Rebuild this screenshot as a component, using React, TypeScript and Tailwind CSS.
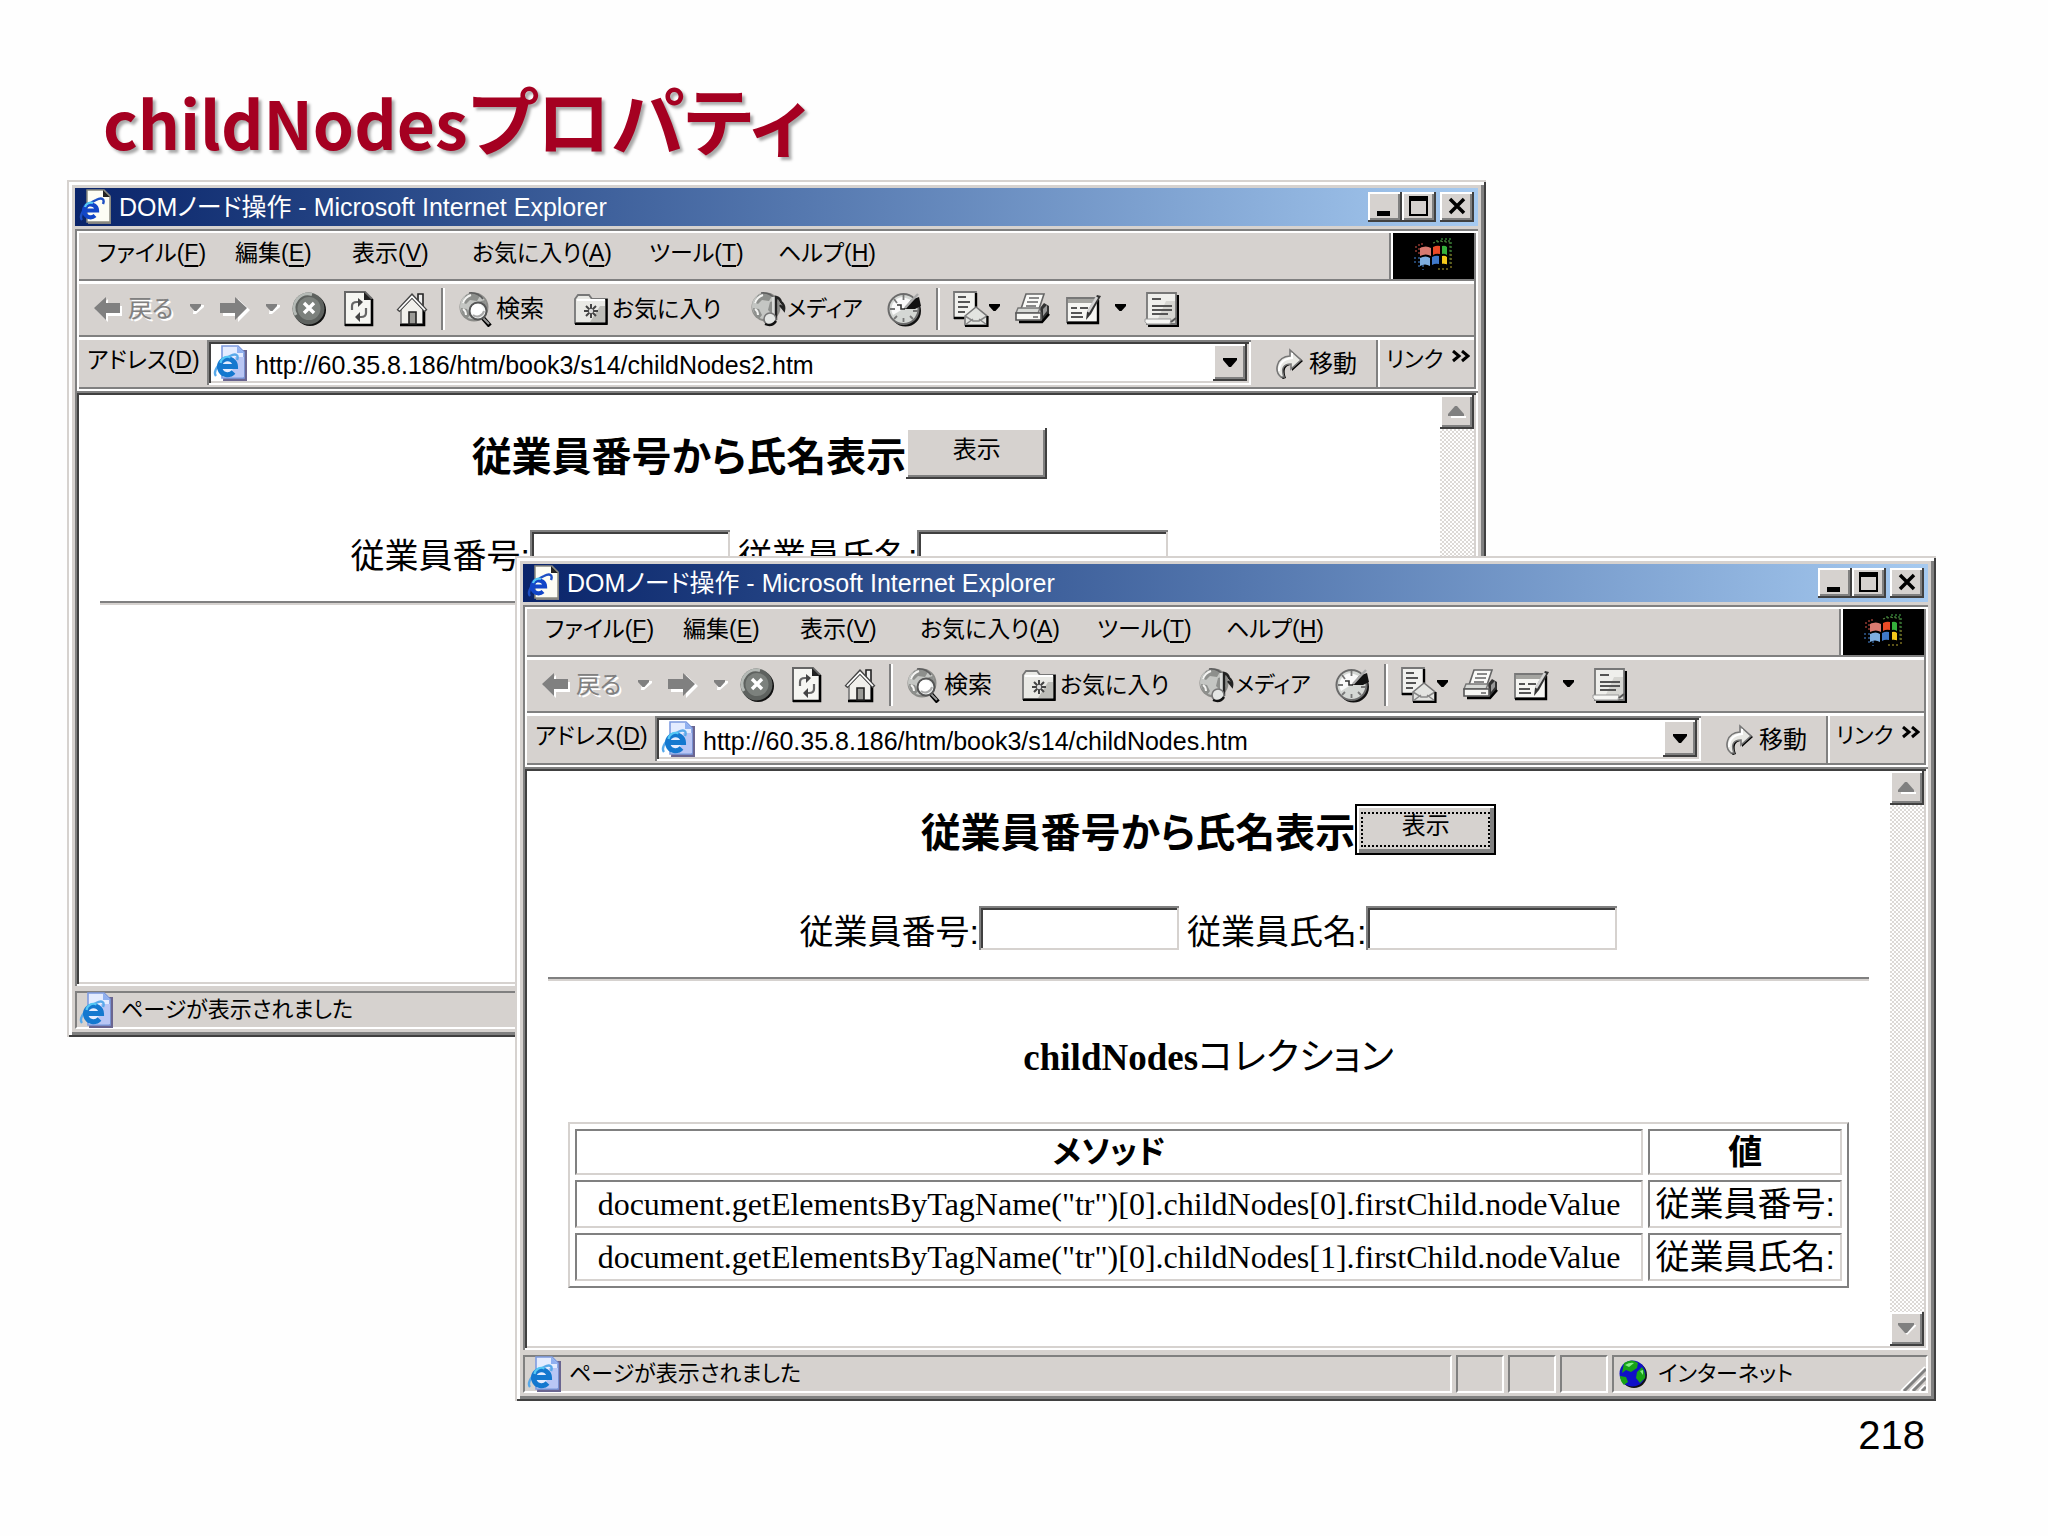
import React from "react";

const RAISED =
  "bg-[#d6d2cf] shadow-[inset_-2px_-2px_0_#404040,inset_2px_2px_0_#ffffff,inset_-4px_-4px_0_#808080]";
const JP = "font-['Liberation_Sans','Noto_Sans_CJK_JP',sans-serif] [font-feature-settings:'palt']";
const JP_SERIF = "font-['Liberation_Serif','Noto_Sans_CJK_JP',serif]";

/* ---------- icons ---------- */

function PageIcon({ title = false }: { title?: boolean }) {
  return (
    <svg viewBox="0 0 34 36" className="h-9 w-[34px] shrink-0" aria-hidden="true">
      {title ? (
        <>
          <path d="M9 2h17l6 6v27H9z" fill="#808080" />
          <path d="M8 1h17l6 6v26H8z" fill="#fdfdf4" stroke="#8a8a80" strokeWidth="1.5" />
          <path d="M24 1v7h7z" fill="#222" />
        </>
      ) : (
        <>
          <path d="M12 5h22v31H10z" fill="#6a6590" />
          <path d="M9 1h16l6 6v26H9z" fill="#e4ecff" stroke="#7d9be0" strokeWidth="1.6" />
          <path d="M24 1v7h7z" fill="#8fb0f0" />
          <path d="M22 12h9v20H18z" fill="#b9c6f4" />
        </>
      )}
      <path d="M3 31C-1 26 8 15 17 11c6-3 9-1 7 4" fill="none" stroke={title ? "#1d4fc4" : "#58a9ea"} strokeWidth="2.4" />
      <path
        d={title ? "M5 21.500h13a6.500 6.500 0 1 0-2 5" : "M6 21.500h16.500a8 8 0 1 0-2 5.500"}
        fill="none"
        stroke={title ? "#1246c8" : "#1478cf"}
        strokeWidth={title ? "4.200" : "5"}
      />
      <path d={title ? "M6 18a6 6 0 0 1 8-4" : "M7.500 18a7 7 0 0 1 10-5.500"} fill="none" stroke="#55c8f5" strokeWidth="2.2" />
    </svg>
  );
}

function Arrow({ left = false }: { left?: boolean }) {
  return (
    <svg viewBox="0 0 30 26" className="h-[26px] w-[30px] shrink-0" aria-hidden="true">
      {left ? (
        <>
          <path d="M2 14 14 3v7h14v10H14v6z" fill="#fff" />
          <path d="M0 12 12 1v6h14v10H12v7z" fill="#808080" />
        </>
      ) : (
        <>
          <path d="M30 14 18 3v7H3v10h15v6z" fill="#fff" />
          <path d="M27 12 15 1v6H0v10h15v7z" fill="#808080" />
        </>
      )}
    </svg>
  );
}

function Drop({ disabled = false }: { disabled?: boolean }) {
  return (
    <svg viewBox="0 0 14 10" className="h-2.5 w-3.5 shrink-0" aria-hidden="true">
      {disabled && <path d="M3 10h3l8-7V1H4z" fill="#fff" />}
      <path d="M0 0h11v2L6.500 7h-2L0 2z" fill={disabled ? "#808080" : "#000"} />
    </svg>
  );
}

function StopIcon() {
  return (
    <svg viewBox="0 0 34 36" className="h-9 w-[34px]" aria-hidden="true">
      <circle cx="18" cy="19" r="16" fill="#111" />
      <circle cx="16.500" cy="17.500" r="16" fill="#5e625f" />
      <path d="M4 24A14 14 0 0 1 20 3.500" fill="none" stroke="#b5bab6" strokeWidth="3" />
      <circle cx="17" cy="17.500" r="11.500" fill="#7c817d" />
      <path d="m12 12 10 10M22 12 12 22" stroke="#fff" strokeWidth="3.400" />
    </svg>
  );
}

function RefreshIcon() {
  return (
    <svg viewBox="0 0 30 36" className="h-9 w-[30px]" aria-hidden="true">
      <path d="M1 1h20l7 7v26H1z" fill="#f6f6f2" stroke="#666" strokeWidth="2" />
      <path d="M28 8v26H1" fill="none" stroke="#000" strokeWidth="2.600" />
      <path d="M20 1v8h8z" fill="#222" />
      <path d="M8 19v-4q0-4 5-4h2M22 17v5q0 4-5 4h-2" fill="none" stroke="#666" strokeWidth="2.200" />
      <path d="m14 7 5 4-5 5zM16 21l-5 5 5 5z" fill="#444" />
    </svg>
  );
}

function HomeIcon() {
  return (
    <svg viewBox="0 0 32 36" className="h-9 w-8" aria-hidden="true">
      <path d="M22 3h5v13h-5z" fill="#eee" stroke="#222" strokeWidth="1.600" />
      <path d="M5 18 16 7l11 11v15H5z" fill="#f1f0ec" stroke="#777" strokeWidth="1.600" />
      <path d="M28 18v16H4" fill="none" stroke="#000" strokeWidth="2.600" />
      <path d="M2 20 16 5l14 15" fill="none" stroke="#444" strokeWidth="4" />
      <path d="M3 19 16 5.500 29 19" fill="none" stroke="#fff" strokeWidth="1.800" />
      <path d="M13 21h7v12h-7z" fill="#9a9a96" stroke="#222" strokeWidth="1.600" />
    </svg>
  );
}

function GlobeBase() {
  return (
    <>
      <circle cx="16" cy="16" r="14.500" fill="#8b8b88" />
      <circle cx="15" cy="15" r="13" fill="#c4c6c3" />
      <path d="M8 4q8-4 14 1l-3 5-7-1-4 4-4-2zM3 17l6 1 3 6-3 4q-6-5-6-11zM20 11l7-2 2 8-6 7-5-5z" fill="#8d8f8c" />
      <path d="M5 12q2-6 8-8M5 18q3 2 3 6" fill="none" stroke="#f4f4f2" strokeWidth="2" />
      <path d="M11 2q9-1 14 6" fill="none" stroke="#5e5e5e" strokeWidth="1.600" />
    </>
  );
}

function SearchIcon() {
  return (
    <svg viewBox="0 0 34 36" className="h-9 w-[34px] shrink-0" aria-hidden="true">
      <GlobeBase />
      <path d="m25 27 7 8" stroke="#000" strokeWidth="4.500" />
      <path d="m24 26 7 7" stroke="#999" strokeWidth="2" />
      <circle cx="20" cy="20" r="8.500" fill="#f3f5f4" stroke="#555" strokeWidth="2" />
      <circle cx="19" cy="19" r="6" fill="#fff" />
      <path d="M15 24a7 7 0 0 0 11-4" fill="none" stroke="#aaa" strokeWidth="2" />
    </svg>
  );
}

function FavoriteIcon() {
  return (
    <svg viewBox="0 0 34 32" className="h-8 w-[34px] shrink-0" aria-hidden="true">
      <path d="M1 6 4 2h11l3 4h15v24H1z" fill="#e9e9e5" stroke="#777" strokeWidth="1.800" />
      <path d="M3 7h28" stroke="#fff" strokeWidth="2" />
      <path d="M32.500 6v25H1" fill="none" stroke="#000" strokeWidth="2.400" />
      <path d="M26 13h5v16H16z" fill="#bdbdb8" />
      <path d="M17 11v14M10 18h14M12 13l10 10M22 13 12 23" stroke="#444" strokeWidth="2" />
      <circle cx="17" cy="18" r="2.200" fill="#ddd" />
    </svg>
  );
}

function MediaIcon() {
  return (
    <svg viewBox="0 0 36 36" className="h-9 w-9 shrink-0" aria-hidden="true">
      <GlobeBase />
      <path d="M22 28V6q4-1 4 2v20z" fill="#d8dad8" />
      <path d="M26 29V6q4 1 5 5 4 3 3 8l-4-5" fill="none" stroke="#222" strokeWidth="2.400" />
      <circle cx="20" cy="28" r="6" fill="#e4e6e4" stroke="#777" strokeWidth="1.600" />
      <path d="M15 33q7 3 11-3" fill="none" stroke="#111" strokeWidth="2.400" />
    </svg>
  );
}

function HistoryIcon() {
  return (
    <svg viewBox="0 0 36 36" className="h-9 w-9" aria-hidden="true">
      <circle cx="18.500" cy="20" r="15.500" fill="#111" />
      <circle cx="16.500" cy="18" r="15" fill="#d4d7d4" stroke="#6b6b6b" strokeWidth="2" />
      <path d="M6 24A12 12 0 0 1 16 6l8 3-8 9z" fill="#fafafa" />
      <g stroke="#777" strokeWidth="1.800">
        <path d="M16.500 4v5M16.500 27v4M3 18h5M26 20h5M7 8l3 4M7 28l3-3M26 28l-3-3" />
      </g>
      <path d="m17 18 7-9 8-3 2 9-6 3z" fill="#111" />
      <path d="M18 17 31 3" stroke="#aaa" strokeWidth="2.400" />
      <path d="M10 14h4v4h4" fill="none" stroke="#333" strokeWidth="1.600" />
    </svg>
  );
}

function MailIcon() {
  return (
    <svg viewBox="0 0 36 36" className="h-9 w-9" aria-hidden="true">
      <path d="M1 1h22v26H1z" fill="#f1f1ee" stroke="#777" strokeWidth="1.800" />
      <path d="M23 2v14M1 27h10" stroke="#000" strokeWidth="2.400" />
      <path d="M5 6h8M5 11h12M5 16h10M5 21h7" stroke="#555" strokeWidth="2" />
      <path d="m12 25 11-9 11 9v9H12z" fill="#e3e4e1" stroke="#777" strokeWidth="1.600" />
      <path d="m12 25 8 5h6l8-5M12 34l8-6M34 34l-8-6" fill="none" stroke="#888" strokeWidth="1.500" />
      <path d="M34.500 25v10H12" fill="none" stroke="#000" strokeWidth="2.200" />
    </svg>
  );
}

function PrintIcon() {
  return (
    <svg viewBox="0 0 36 34" className="h-[34px] w-9" aria-hidden="true">
      <path d="M11 2h18l-5 15H6z" fill="#fafaf8" stroke="#666" strokeWidth="1.600" />
      <path d="M14 6h10M12 10h11M11 14h10" stroke="#666" strokeWidth="1.600" />
      <path d="m25 16 4-5 5 3v8l-7 9z" fill="#333" />
      <path d="M3 16h22l-2 5H1z" fill="#d8dad7" stroke="#777" strokeWidth="1.400" />
      <path d="M1 21h25v7H1z" fill="#f7f7f4" stroke="#555" strokeWidth="1.600" />
      <path d="M4 30h23l7-8" fill="none" stroke="#000" strokeWidth="2.600" />
      <path d="m28 17 4-4v6l-4 5z" fill="#999" />
      <path d="M18 25h5" stroke="#888" strokeWidth="2" />
    </svg>
  );
}

function EditIcon() {
  return (
    <svg viewBox="0 0 36 34" className="h-[34px] w-9" aria-hidden="true">
      <path d="M1 6h31v24H1z" fill="#f6f6f3" stroke="#777" strokeWidth="1.800" />
      <path d="M2 7h29v4H2z" fill="#a4a4a0" />
      <path d="M32 8v23H1" fill="none" stroke="#000" strokeWidth="2.400" />
      <path d="M5 16h6M14 16h8M5 21h11M5 25h12" stroke="#555" strokeWidth="1.800" />
      <path d="m31 3 4 1-10 18-5 6 1-8z" fill="#333" />
      <path d="m31 5-9 15" stroke="#d4d4d4" strokeWidth="2.600" />
    </svg>
  );
}

function DiscussIcon() {
  return (
    <svg viewBox="0 0 36 36" className="h-9 w-9" aria-hidden="true">
      <path d="M5 4h30v32H4z" fill="#000" />
      <path d="M3 2h29v31H3z" fill="#efefec" stroke="#777" strokeWidth="1.800" />
      <path d="M22 10h9v22H12z" fill="#d6d6d2" />
      <path d="M8 8h9M8 15h20M8 19h20M8 23h16" stroke="#555" strokeWidth="2" />
      <path d="M1 28h26l-1 5H3q-3-2-2-5z" fill="#f6f6f4" stroke="#999" strokeWidth="1" />
      <path d="m27 31 5-4" stroke="#555" strokeWidth="2" />
    </svg>
  );
}

function GoIcon() {
  return (
    <svg viewBox="0 0 30 34" className="h-[34px] w-[30px] shrink-0" aria-hidden="true">
      <path d="M8 32C-1 26 0 11 16 10V4l12 10-11 10v-6c-7 0-9 5-6 13z" fill="#000" />
      <path d="M6 30C-1 24 1 10 15 9V3l11 10-10 9v-5C8 17 6 22 9 30z" fill="#e8e8e4" stroke="#777" strokeWidth="1.600" />
      <path d="M17 6v5C8 12 4 17 4 24" fill="none" stroke="#fff" strokeWidth="2" />
    </svg>
  );
}

function WindowsLogo() {
  return (
    <svg viewBox="0 0 46 36" className="h-9 w-[46px]" aria-hidden="true">
      <g opacity="0.600" strokeWidth="2" strokeDasharray="2 2" fill="none">
        <path d="M5 8v8M8 6v10M11 5v11" stroke="#b5463c" />
        <path d="M4 19v8M8 19v12M12 19v13" stroke="#3c74b8" />
        <path d="M25 3h14M30 1h10M40 4v10" stroke="#3f9440" />
        <path d="M40 16v14M37 31h-12" stroke="#9a8a28" />
      </g>
      <path d="M9 10q6-3 11 0v8q-5-3-11 0z" fill="#d87a70" />
      <path d="M22 9q4-2 7-1v8q-4-1-7 1z" fill="#ec4a26" />
      <path d="M9 20q6-3 10 0v8q-5-3-10 0z" fill="#7eaee0" />
      <path d="M21 19q4-2 7-1v8q-4-1-7 1z" fill="#3f78c8" />
      <path d="M31 8q3-1 5 1v8q-3-2-5-1z" fill="#35b03c" />
      <path d="M31 18q3-1 5 1v8q-3-2-5-1z" fill="#f4c81a" />
      <path d="M20.500 7q8-4 17-1v22q-8-3-17 1" fill="none" stroke="#000" strokeWidth="2" />
      <path d="M22 5q9-3 17 0v22" fill="none" stroke="#4f7a3a" strokeWidth="1.200" strokeDasharray="2 2" />
    </svg>
  );
}

function EarthIcon() {
  return (
    <svg viewBox="0 0 30 30" className="h-[30px] w-[30px] shrink-0" aria-hidden="true">
      <circle cx="16" cy="16" r="13" fill="#111" />
      <circle cx="14.500" cy="14.500" r="13" fill="#1010c8" />
      <path d="M6 4q8-5 14 0l-1 5-6 4-5-2-4 3zM19 13l5-5q4 5 3 11l-5 5-4-5zM2 17l6 1 2 5-4 3q-4-4-4-9z" fill="#17a317" />
      <path d="M7 6q5-3 9-2l-5 4zM22 12l3-1v5z" fill="#86ee86" />
    </svg>
  );
}

/* ---------- window parts ---------- */

function CaptionButton({ label, children, className = "" }: { label: string; children: React.ReactNode; className?: string }) {
  return (
    <button aria-label={label} className={`flex h-[30px] w-[34px] items-center justify-center ${RAISED} ${className}`}>
      <svg viewBox="0 0 34 30" className="h-[30px] w-[34px]" aria-hidden="true">
        {children}
      </svg>
    </button>
  );
}

function TitleBar() {
  return (
    <header className="mb-[3px] flex h-[38px] items-center bg-linear-to-r from-[#0a246a] to-[#a6caf0] pl-1 pr-1">
      <PageIcon title />
      <h2 className="ml-1.5 min-w-0 flex-1 truncate text-[25px] leading-9 text-white">
        DOMノード操作 - Microsoft Internet Explorer
      </h2>
      <CaptionButton label="最小化">
        <path d="M9 19h13v5H9z" />
      </CaptionButton>
      <CaptionButton label="最大化" className="mr-1">
        <path d="M8 7h17v16H8z" fill="none" stroke="#000" strokeWidth="2" />
        <path d="M7 4h19v5H7z" />
      </CaptionButton>
      <CaptionButton label="閉じる">
        <path d="M10 7 24 21M24 7 10 21" stroke="#000" strokeWidth="3.500" />
      </CaptionButton>
    </header>
  );
}

const menuItems = [
  { text: "ファイル", key: "F", width: "w-[138px]" },
  { text: "編集", key: "E", width: "w-[117px]" },
  { text: "表示", key: "V", width: "w-[120px]" },
  { text: "お気に入り", key: "A", width: "w-[177px]" },
  { text: "ツール", key: "T", width: "w-[129px]" },
  { text: "ヘルプ", key: "H", width: "w-[120px]" },
];

function Mnemonic({ text, letter }: { text: string; letter: string }) {
  return (
    <>
      {text}(<span className="underline decoration-2 underline-offset-4">{letter}</span>)
    </>
  );
}

function MenuBar() {
  return (
    <div className="flex h-[46px]">
      <nav className="flex flex-1 items-start pl-[18px] pt-0.5">
        {menuItems.map((m) => (
          <button key={m.key} className={`${m.width} whitespace-nowrap text-left text-[23px] leading-9`}>
            <Mnemonic text={m.text} letter={m.key} />
          </button>
        ))}
      </nav>
      <div className="w-1 border-l-2 border-r-2 border-l-[#808080] border-r-white" />
      <div className="flex w-[81px] items-center justify-center bg-black">
        <WindowsLogo />
      </div>
    </div>
  );
}

function BandLine() {
  return <div className="h-[5px] border-b-[3px] border-t-2 border-b-white border-t-[#808080]" />;
}

function ToolSeparator() {
  return <div className="mx-[13px] h-[42px] w-1 border-l-2 border-r-2 border-l-[#808080] border-r-white" />;
}

function ToolBar() {
  return (
    <div className="flex h-[51px] items-center whitespace-nowrap pb-0.5 pl-[15px] text-[24px] leading-9">
      <button className="flex w-[82px] items-center gap-1 text-[#808080] [text-shadow:2px_2px_0_#fff]">
        <Arrow left />
        戻る
      </button>
      <button aria-label="戻る履歴" className="ml-[14px] flex">
        <Drop disabled />
      </button>
      <button aria-label="進む" className="ml-4 flex">
        <Arrow />
      </button>
      <button aria-label="進む履歴" className="ml-4 flex">
        <Drop disabled />
      </button>
      <button aria-label="中止" className="ml-3 flex">
        <StopIcon />
      </button>
      <button aria-label="更新" className="ml-[18px] flex">
        <RefreshIcon />
      </button>
      <button aria-label="ホーム" className="ml-[22px] flex">
        <HomeIcon />
      </button>
      <ToolSeparator />
      <button className="flex w-[116px] items-center gap-1">
        <SearchIcon />
        検索
      </button>
      <button className="flex w-[176px] items-center gap-1 text-[23px]">
        <FavoriteIcon />
        お気に入り
      </button>
      <button className="flex w-[137px] items-center gap-px text-[22px]">
        <MediaIcon />
        メディア
      </button>
      <button aria-label="履歴" className="flex">
        <HistoryIcon />
      </button>
      <ToolSeparator />
      <button aria-label="メール" className="flex items-center">
        <MailIcon />
        <Drop />
      </button>
      <button aria-label="印刷" className="ml-3 flex">
        <PrintIcon />
      </button>
      <button aria-label="編集" className="ml-[15px] flex">
        <EditIcon />
      </button>
      <button aria-label="編集メニュー" className="ml-[13px] flex">
        <Drop />
      </button>
      <button aria-label="ディスカッション" className="ml-[15px] flex">
        <DiscussIcon />
      </button>
    </div>
  );
}

function AddressBar({ id, url }: { id: string; url: string }) {
  return (
    <div className="flex h-[47px] whitespace-nowrap text-[24px] leading-9">
      <label htmlFor={id} className="w-32 shrink-0 pl-2 pt-0.5 text-[23px]">
        <Mnemonic text="アドレス" letter="D" />
      </label>
      <div className="flex h-[45px] flex-1 items-center bg-white pl-1.5 pr-1 shadow-[inset_2px_2px_0_#808080,inset_-2px_-2px_0_#ffffff,inset_4px_4px_0_#404040,inset_-4px_-4px_0_#d6d2cf]">
        <PageIcon />
        <input
          id={id}
          type="text"
          defaultValue={url}
          className="ml-2 min-w-0 flex-1 bg-transparent pt-1 text-[25px] leading-8 outline-none"
        />
        <button aria-label="アドレス一覧" className={`flex h-[37px] w-[34px] items-center justify-center ${RAISED}`}>
          <svg viewBox="0 0 16 10" className="h-2.5 w-4" aria-hidden="true">
            <path d="M1 0h14v2L9 9H7L1 2z" />
          </svg>
        </button>
      </div>
      <div className="mr-1 w-0.5 bg-[#d6d2cf]" />
      <button className="flex w-[119px] items-center gap-1 pl-[18px]">
        <GoIcon />
        移動
      </button>
      <div className="w-1 border-l-2 border-r-2 border-l-[#808080] border-r-white" />
      <button className="flex w-[94px] justify-between pl-1.5 pr-1 pt-0.5 text-[22px]">
        リンク
        <svg viewBox="0 0 18 14" className="mt-2 h-3.5 w-[18px]" aria-hidden="true">
          <path d="m1 1 6 5-6 5M10 1l6 5-6 5" fill="none" stroke="#000" strokeWidth="3" />
        </svg>
      </button>
    </div>
  );
}

function ScrollBar() {
  return (
    <div className="flex w-[34px] shrink-0 flex-col justify-between bg-[conic-gradient(#ffffff_25%,#dcd9d6_0_50%,#ffffff_0_75%,#dcd9d6_0)] bg-[length:4px_4px]">
      <button aria-label="上へ" className={`flex h-[34px] items-center justify-center ${RAISED}`}>
        <svg viewBox="0 0 18 12" className="h-3 w-[18px]" aria-hidden="true">
          <path d="M3 12h15v-2H3z" fill="#fff" />
          <path d="M0 10v-2l7-8h2l7 8v2z" fill="#808080" />
        </svg>
      </button>
      <button aria-label="下へ" className={`flex h-[34px] items-center justify-center ${RAISED}`}>
        <svg viewBox="0 0 18 12" className="h-3 w-[18px]" aria-hidden="true">
          <path d="m9 12 9-9V2H3z" fill="#fff" />
          <path d="M0 0h16v2l-7 8H7L0 2z" fill="#808080" />
        </svg>
      </button>
    </div>
  );
}

const PANEL = "flex h-[38px] items-center border-b-2 border-l-2 border-r-2 border-t-2 border-b-white border-l-[#808080] border-r-white border-t-[#808080]";

function StatusBar() {
  return (
    <footer className="mt-[5px] flex gap-1 whitespace-nowrap text-[22px] leading-8">
      <div className={`${PANEL} flex-1 gap-2 pl-0.5`}>
        <PageIcon />
        ページが表示されました
      </div>
      <div className={`${PANEL} w-12`} />
      <div className={`${PANEL} w-12`} />
      <div className={`${PANEL} w-12`} />
      <div className={`${PANEL} w-[316px] justify-between pl-1`}>
        <span className="flex items-center gap-2.5">
          <EarthIcon />
          インターネット
        </span>
        <svg viewBox="0 0 26 26" className="mt-2 h-[26px] w-[26px]" aria-hidden="true">
          <path d="M1 26 25 2M10 26 25 11M19 26l6-6" stroke="#fff" strokeWidth="2" />
          <path d="M4 26 26 4M13 26l13-13M22 26l4-4" stroke="#808080" strokeWidth="3" />
        </svg>
      </div>
    </footer>
  );
}

function TextField({ id, label, width }: { id: string; label: string; width: string }) {
  return (
    <div className="flex items-start">
      <label htmlFor={id} className="whitespace-nowrap pt-1 text-[34px] leading-[44px]">
        {label}
      </label>
      <input
        id={id}
        type="text"
        className={`${width} h-11 bg-white px-2 text-[26px] outline-none shadow-[inset_2px_2px_0_#808080,inset_-2px_-2px_0_#d6d2cf,inset_4px_4px_0_#404040]`}
      />
    </div>
  );
}

function LookupForm({ id, focused = false }: { id: string; focused?: boolean }) {
  return (
    <form onSubmit={(e) => e.preventDefault()}>
      <div className="flex items-start justify-center">
        <h3 className="whitespace-nowrap pt-1 text-[40px] font-bold leading-[50px]">従業員番号から氏名表示</h3>
        {focused ? (
          <button className="h-[51px] w-[141px] border-2 border-black bg-[#d6d2cf] p-1 text-[24px] leading-6 shadow-[inset_2px_2px_0_#ffffff,inset_-4px_-4px_0_#808080]">
            <span className="flex h-[35px] justify-center border-2 border-dotted border-black">表示</span>
          </button>
        ) : (
          <button className={`h-[51px] w-[141px] pb-2 text-[24px] leading-8 ${RAISED}`}>表示</button>
        )}
      </div>
      <div className="mt-12 flex justify-center gap-2">
        <TextField id={`${id}-number`} label="従業員番号:" width="w-[200px]" />
        <TextField id={`${id}-name`} label="従業員氏名:" width="w-[251px]" />
      </div>
      <hr className="mt-[23px] h-1 border-b-2 border-t-2 border-b-[#d6d2cf] border-t-[#808080]" />
    </form>
  );
}

function BrowserWindow({
  id,
  url,
  className,
  bodyClass,
  children,
}: {
  id: string;
  url: string;
  className: string;
  bodyClass: string;
  children: React.ReactNode;
}) {
  return (
    <article
      className={`col-start-1 row-start-1 self-start bg-[#d6d2cf] p-2 text-black shadow-[inset_2px_2px_0_#d6d2cf,inset_-2px_-2px_0_#404040,inset_5px_5px_0_#ffffff,inset_-5px_-5px_0_#808080] ${className}`}
    >
      <TitleBar />
      <div className="p-1 shadow-[inset_2px_2px_0_#808080,inset_-2px_-2px_0_#ffffff,inset_4px_4px_0_#ffffff,inset_-4px_-4px_0_#808080]">
        <MenuBar />
        <BandLine />
        <ToolBar />
        <BandLine />
        <AddressBar id={`${id}-address`} url={url} />
      </div>
      <div className="flex bg-white p-1 shadow-[inset_2px_2px_0_#808080,inset_-2px_-2px_0_#ffffff,inset_4px_4px_0_#404040,inset_-4px_-4px_0_#d6d2cf]">
        <div className={`min-w-0 flex-1 px-[21px] pt-[33px] ${bodyClass}`}>{children}</div>
        <ScrollBar />
      </div>
      <StatusBar />
    </article>
  );
}

const CELL = "border-2 border-b-[#d6d2cf] border-l-[#808080] border-r-[#d6d2cf] border-t-[#808080] p-0 text-center whitespace-nowrap";

const rows = [
  { method: 'document.getElementsByTagName("tr")[0].childNodes[0].firstChild.nodeValue', value: "従業員番号:" },
  { method: 'document.getElementsByTagName("tr")[0].childNodes[1].firstChild.nodeValue', value: "従業員氏名:" },
];

function NodeTable() {
  return (
    <table className="mx-auto w-[97%] border-separate border-spacing-[5px] border-2 border-b-[#808080] border-l-[#d6d2cf] border-r-[#808080] border-t-[#d6d2cf]">
      <caption className={`${JP_SERIF} pb-10 pt-[53px] text-[37px] leading-[48px] [font-feature-settings:'palt']`}>
        <b>childNodes</b>
        コレクション
      </caption>
      <thead>
        <tr>
          <th className={`${CELL} text-[32px] font-bold leading-[42px]`}>メソッド</th>
          <th className={`${CELL} w-[194px] text-[34px] font-bold leading-[42px]`}>値</th>
        </tr>
      </thead>
      <tbody>
        {rows.map((r) => (
          <tr key={r.value}>
            <td className={`${CELL} ${JP_SERIF} text-[32px] leading-[44px]`}>{r.method}</td>
            <td className={`${CELL} text-[34px] leading-[44px]`}>{r.value}</td>
          </tr>
        ))}
      </tbody>
    </table>
  );
}

export default function App() {
  return (
    <main className={`flex min-h-screen flex-col bg-[#fefefe] ${JP}`}>
      <h1 className="flex items-baseline whitespace-nowrap pb-3 pl-[103px] pt-[68px] font-['Noto_Sans_CJK_JP',sans-serif] text-[74px] font-bold leading-[100px] text-[#a50021] [text-shadow:3px_3px_3px_#a8a8a8]">
        <span className="text-[66px] leading-none">childNodes</span>プロパティ
      </h1>
      <section className="grid grid-cols-1 pl-[67px] pr-[112px]">
        <BrowserWindow
          id="back"
          url="http://60.35.8.186/htm/book3/s14/childNodes2.htm"
          className="mr-[450px]"
          bodyClass="min-h-[587px]"
        >
          <LookupForm id="back" />
        </BrowserWindow>
        <BrowserWindow
          id="front"
          url="http://60.35.8.186/htm/book3/s14/childNodes.htm"
          className="z-10 ml-[448px] mt-[376px]"
          bodyClass="min-h-[575px]"
        >
          <LookupForm id="front" focused />
          <NodeTable />
        </BrowserWindow>
      </section>
      <p className="pr-[123px] pt-2.5 text-right text-[40px] leading-[48px] text-black">218</p>
    </main>
  );
}
